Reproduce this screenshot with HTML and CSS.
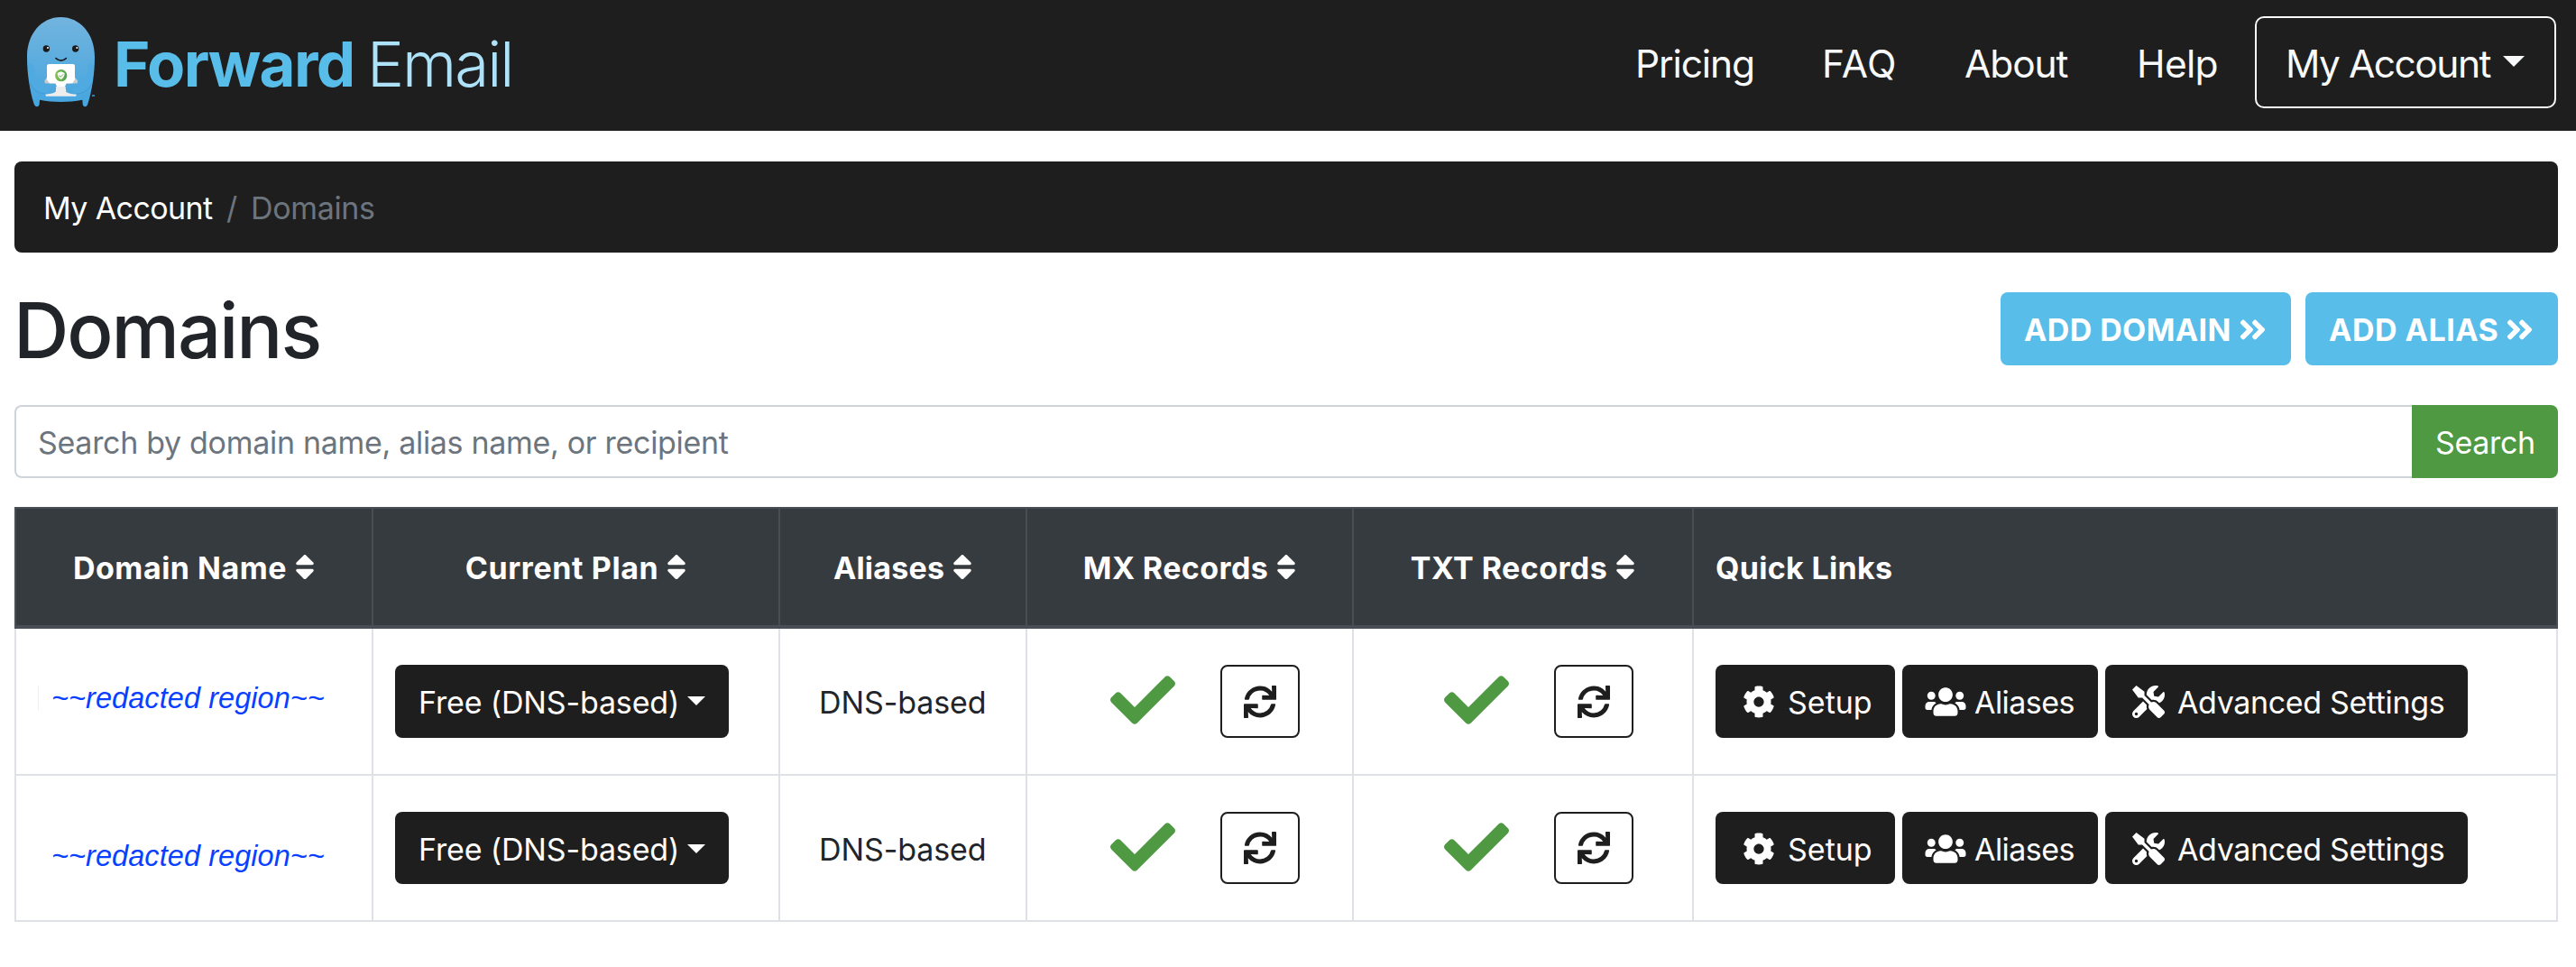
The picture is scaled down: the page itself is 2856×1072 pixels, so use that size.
FILE: index.html
```
<!DOCTYPE html>
<html lang="en">
<head>
<meta charset="utf-8">
<title>Domains</title>
<link rel="stylesheet" href="styles.css">
</head>
<body>
<svg class="sprite" aria-hidden="true">
  <symbol id="sort" viewBox="0 0 320 512"><path d="M41 288h238c21.4 0 32.1 25.9 17 41L177 448c-9.4 9.4-24.6 9.4-33.9 0L24 329c-15.1-15.1-4.4-41 17-41zm255-105L177 64c-9.4-9.4-24.6-9.4-33.9 0L24 183c-15.1 15.1-4.4 41 17 41h238c21.4 0 32.1-25.9 17-41z"/></symbol>
  <symbol id="angles" viewBox="0 0 448 512"><path d="M224.3 273l-136 136c-9.4 9.4-24.6 9.4-33.9 0l-22.6-22.6c-9.4-9.4-9.4-24.6 0-33.9l96.4-96.4-96.4-96.4c-9.4-9.4-9.4-24.6 0-33.9L54.3 103c9.4-9.4 24.6-9.4 33.9 0l136 136c9.5 9.4 9.5 24.6.1 34zm192-34l-136-136c-9.4-9.4-24.6-9.4-33.9 0l-22.6 22.6c-9.4 9.4-9.4 24.6 0 33.9l96.4 96.4-96.4 96.4c-9.4 9.4-9.4 24.6 0 33.9l22.6 22.6c9.4 9.4 24.6 9.4 33.9 0l136-136c9.4-9.2 9.4-24.4 0-33.8z"/></symbol>
  <symbol id="check" viewBox="0 0 512 512"><path d="M173.898 439.404l-166.4-166.4c-9.997-9.997-9.997-26.206 0-36.204l36.203-36.204c9.997-9.998 26.207-9.998 36.204 0L192 312.69 432.095 72.596c9.997-9.997 26.207-9.997 36.204 0l36.203 36.204c9.997 9.997 9.997 26.206 0 36.204l-294.4 294.401c-9.998 9.997-26.207 9.997-36.204-.001z"/></symbol>
  <symbol id="sync" viewBox="0 0 512 512"><path d="M440.65 12.57l4 82.77A247.16 247.16 0 0 0 255.83 8C134.73 8 33.91 94.92 12.29 209.82A12 12 0 0 0 24.09 224h49.05a12 12 0 0 0 11.67-9.26 175.91 175.91 0 0 1 317-56.94l-101.46-4.86a12 12 0 0 0-12.57 12v47.41a12 12 0 0 0 12 12H500a12 12 0 0 0 12-12V12a12 12 0 0 0-12-12h-47.37a12 12 0 0 0-11.98 12.57zM255.83 432a175.61 175.61 0 0 1-146-77.8l101.8 4.87a12 12 0 0 0 12.57-12v-47.4a12 12 0 0 0-12-12H12a12 12 0 0 0-12 12V500a12 12 0 0 0 12 12h47.35a12 12 0 0 0 12-12.6l-4.15-82.57A247.17 247.17 0 0 0 255.83 504c121.11 0 221.93-86.92 243.55-201.82a12 12 0 0 0-11.8-14.18h-49.05a12 12 0 0 0-11.67 9.26A175.86 175.86 0 0 1 255.83 432z"/></symbol>
  <symbol id="cog" viewBox="0 0 512 512"><path d="M487.4 315.7l-42.6-24.6c4.3-23.2 4.3-47 0-70.2l42.6-24.6c4.9-2.8 7.1-8.6 5.5-14-11.1-35.6-30-67.8-54.7-94.6-3.8-4.1-10-5.1-14.8-2.3L380.8 110c-17.9-15.4-38.5-27.3-60.8-35.1V25.8c0-5.6-3.9-10.5-9.4-11.7-36.7-8.2-74.3-7.8-109.2 0-5.5 1.2-9.4 6.1-9.4 11.7V75c-22.2 7.9-42.8 19.8-60.8 35.1L88.7 85.5c-4.9-2.8-11-1.9-14.8 2.3-24.7 26.7-43.6 58.9-54.7 94.6-1.7 5.4.6 11.2 5.5 14L67.3 221c-4.3 23.2-4.3 47 0 70.2l-42.6 24.6c-4.9 2.8-7.1 8.6-5.5 14 11.1 35.6 30 67.8 54.7 94.6 3.8 4.1 10 5.1 14.8 2.3l42.6-24.6c17.9 15.4 38.5 27.3 60.8 35.1v49.2c0 5.6 3.9 10.5 9.4 11.7 36.7 8.2 74.3 7.8 109.2 0 5.5-1.2 9.4-6.1 9.4-11.7v-49.2c22.2-7.9 42.8-19.8 60.8-35.1l42.6 24.6c4.9 2.8 11 1.9 14.8-2.3 24.7-26.7 43.6-58.9 54.7-94.6 1.5-5.5-.7-11.3-5.6-14.1zM256 336c-44.1 0-80-35.9-80-80s35.9-80 80-80 80 35.9 80 80-35.9 80-80 80z"/></symbol>
  <symbol id="users" viewBox="0 0 640 512"><path d="M96 224c35.3 0 64-28.7 64-64s-28.7-64-64-64-64 28.7-64 64 28.7 64 64 64zm448 0c35.3 0 64-28.7 64-64s-28.7-64-64-64-64 28.7-64 64 28.7 64 64 64zm32 32h-64c-17.6 0-33.5 7.1-45.1 18.6 40.3 22.1 68.9 62 75.1 109.4h66c17.7 0 32-14.3 32-32v-32c0-35.3-28.7-64-64-64zm-256 0c61.9 0 112-50.1 112-112S381.9 32 320 32 208 82.1 208 144s50.1 112 112 112zm76.8 32h-8.3c-20.8 10-43.9 16-68.5 16s-47.6-6-68.5-16h-8.3C179.6 288 128 339.6 128 403.2V432c0 26.5 21.5 48 48 48h288c26.5 0 48-21.5 48-48v-28.8c0-63.6-51.6-115.2-115.2-115.2zm-223.7-13.4C161.5 263.1 145.6 256 128 256H64c-35.3 0-64 28.7-64 64v32c0 17.7 14.3 32 32 32h65.9c6.3-47.4 34.9-87.3 75.2-109.4z"/></symbol>
  <symbol id="tools" viewBox="0 0 512 512"><path d="M501.1 395.7L384 278.6c-23.1-23.1-57.6-27.6-85.4-13.9L192 158.1V96L64 0 0 64l96 128h62.1l106.6 106.6c-13.6 27.8-9.2 62.3 13.9 85.4l117.1 117.1c14.6 14.6 38.2 14.6 52.7 0l52.7-52.7c14.5-14.6 14.5-38.2 0-52.7zM331.7 225c28.3 0 54.9 11 74.9 31l19.4 19.4c15.8-6.9 30.8-16.5 43.8-29.5 37.1-37.1 49.7-89.3 37.9-136.7-2.2-9-13.5-12.1-20.1-5.5l-74.4 74.4-67.9-11.3L334 98.9l74.4-74.4c6.6-6.6 3.4-17.9-5.7-20.2-47.4-11.7-99.6.9-136.6 37.9-28.5 28.5-41.9 66.1-41.2 103.6l82.1 82.1c8.1-1.9 16.5-2.9 24.7-2.9zm-103.9 82l-56.7-56.7L18.7 402.8c-25 25-25 65.5 0 90.5s65.5 25 90.5 0l123.6-123.6c-7.6-19.9-9.9-41.6-5-62.7zM64 472c-13.2 0-24-10.8-24-24 0-13.3 10.7-24 24-24s24 10.7 24 24c0 13.2-10.7 24-24 24z"/></symbol>
</svg>

<header class="navbar">
  <a class="brand">
    <svg class="logo" viewBox="0 0 330 360">
      <defs>
        <linearGradient id="skin" x1="0" y1="0" x2="0" y2="1"><stop offset="0" stop-color="#72b4de"/><stop offset="1" stop-color="#45a5df"/></linearGradient>
        <linearGradient id="badge" x1="0" y1="0" x2="1" y2="0"><stop offset="0" stop-color="#8cc152"/><stop offset="1" stop-color="#48a550"/></linearGradient>
      </defs>
      <path fill="url(#skin)" d="M157 27C92 27 45 84 45 158c0 58 9 112 23 158 4 12 17 11 18 0l1-14c46 9 95 9 142 0l1 14c1 11 14 12 17 0 14-46 23-100 23-158C270 84 222 27 157 27z"/>
      <path fill="#4faae2" d="M49 192c1-13 18-13 19 0 2 38 17 63 43 68l10 10-12 12c-24 1-46-12-54-34zM266 192c-1-13-18-13-19 0-2 38-17 63-43 68l-10 10 12 12c24 1 46-12 54-34z"/>
      <path fill="none" stroke="#3a93c9" stroke-width="2" d="M55 248c10 22 30 34 53 34M260 248c-10 22-30 34-53 34"/>
      <ellipse cx="109" cy="132" rx="11" ry="11" fill="#1b1b1d"/><circle cx="114" cy="129" r="3" fill="#fff"/>
      <ellipse cx="206" cy="132" rx="11" ry="11" fill="#1b1b1d"/><circle cx="211" cy="129" r="3" fill="#fff"/>
      <path fill="none" stroke="#1b1b1d" stroke-width="5" stroke-linecap="round" d="M141 164q17 15 34 0"/>
      <path fill="#c9cbcd" d="M104 238l8-12h91l10 12v9q-55 5-109 0z"/>
      <path fill="#fff" d="M119 183h79q6 0 6 6v46l-8 12h-20l-5 11 4 16h-35l4-16-5-11h-19l-9-12v-46q0-6 8-6z"/>
      <path fill="#ededee" d="M141 258h32l-2 13q5 12 39 13l-3 6h-98l-4-6q34-2 38-13z"/>
      <circle cx="158" cy="221" r="20" fill="url(#badge)"/>
      <path fill="#fff" d="M158 208l12 5q0 14-12 21-12-7-12-21z"/>
      <path fill="none" stroke="#65ad4f" stroke-width="3" d="M152 221l5 5 8-9"/>
      <path fill="#4faae2" d="M261 286h9v4h-9z"/>
    </svg>
    <span class="brand-forward">Forward</span><span class="brand-email">Email</span>
  </a>
  <nav class="nav">
    <a class="nav-pricing">Pricing</a>
    <a class="nav-faq">FAQ</a>
    <a class="nav-about">About</a>
    <a class="nav-help">Help</a>
    <button class="account"><span>My Account</span><i class="caret caret-lg"></i></button>
  </nav>
</header>

<main class="page">
  <div class="crumbs"><a>My Account</a><span class="slash">/</span><span class="here">Domains</span></div>

  <div class="heading">
    <h1>Domains</h1>
    <div class="actions">
      <a class="add add-domain"><span>ADD DOMAIN</span><svg><use href="#angles"/></svg></a>
      <a class="add add-alias"><span>ADD ALIAS</span><svg><use href="#angles"/></svg></a>
    </div>
  </div>

  <form class="search">
    <div class="field">Search by domain name, alias name, or recipient</div>
    <div class="submit">Search</div>
  </form>

  <div class="table">
    <div class="row head">
      <div class="cell"><span class="h-domain">Domain Name</span><svg><use href="#sort"/></svg></div>
      <div class="cell"><span class="h-plan">Current Plan</span><svg><use href="#sort"/></svg></div>
      <div class="cell"><span class="h-aliases">Aliases</span><svg><use href="#sort"/></svg></div>
      <div class="cell"><span class="h-mx">MX Records</span><svg><use href="#sort"/></svg></div>
      <div class="cell"><span class="h-txt">TXT Records</span><svg><use href="#sort"/></svg></div>
      <div class="cell links"><span class="h-links">Quick Links</span></div>
    </div>
    <div class="row first">
      <div class="cell name"><i class="tick"></i><span>~~redacted region~~</span></div>
      <div class="cell plan"><button class="btn"><span>Free (DNS-based)</span><i class="caret"></i></button></div>
      <div class="cell alias"><span>DNS-based</span></div>
      <div class="cell mx"><svg class="check"><use href="#check"/></svg><button class="refresh"><svg><use href="#sync"/></svg></button></div>
      <div class="cell txt"><svg class="check"><use href="#check"/></svg><button class="refresh"><svg><use href="#sync"/></svg></button></div>
      <div class="cell links">
        <button class="btn setup"><svg><use href="#cog"/></svg><span>Setup</span></button>
        <button class="btn people"><svg><use href="#users"/></svg><span>Aliases</span></button>
        <button class="btn advanced"><svg><use href="#tools"/></svg><span>Advanced Settings</span></button>
      </div>
    </div>
    <div class="row second">
      <div class="cell name"><span>~~redacted region~~</span></div>
      <div class="cell plan"><button class="btn"><span>Free (DNS-based)</span><i class="caret"></i></button></div>
      <div class="cell alias"><span>DNS-based</span></div>
      <div class="cell mx"><svg class="check"><use href="#check"/></svg><button class="refresh"><svg><use href="#sync"/></svg></button></div>
      <div class="cell txt"><svg class="check"><use href="#check"/></svg><button class="refresh"><svg><use href="#sync"/></svg></button></div>
      <div class="cell links">
        <button class="btn setup"><svg><use href="#cog"/></svg><span>Setup</span></button>
        <button class="btn people"><svg><use href="#users"/></svg><span>Aliases</span></button>
        <button class="btn advanced"><svg><use href="#tools"/></svg><span>Advanced Settings</span></button>
      </div>
    </div>
  </div>
</main>
</body>
</html>
```
FILE: styles.css
```
* { box-sizing: border-box; }
body {
  margin: 0;
  background: #fff;
  color: #212529;
  font: 400 34px/50px Inter, "Liberation Sans", sans-serif;
  white-space: nowrap;
}
svg { fill: currentColor; flex: none; display: block; }
.sprite { display: none; }
button { font: inherit; color: inherit; background: none; padding: 0; margin: 0; }
.caret {
  flex: none;
  border: 10px solid transparent;
  border-top-color: currentColor;
  border-bottom: 0;
}
.caret-lg { border-width: 12.5px; border-bottom: 0; }

/* top bar */
.navbar {
  height: 145px;
  background: #1e1e1e;
  display: flex;
  justify-content: space-between;
  padding: 0 22px 0 15px;
}
.brand { display: flex; align-items: flex-start; padding-top: 10px; font-size: 69px; line-height: 122px; }
.logo { width: 110px; height: 120px; }
.brand-forward { width: 281px; margin-left: 1px; font-weight: 700; letter-spacing: -1.6px; color: #59bde9; }
.brand-email { font-weight: 350; letter-spacing: -2px; color: #aee2f8; }
.nav { display: flex; padding-top: 18px; font-size: 42.5px; line-height: 105px; color: #f8f9fa; }
.nav-pricing { width: 207px; letter-spacing: -1.13px; }
.nav-faq { width: 158px; letter-spacing: .5px; }
.nav-about { width: 191px; letter-spacing: -1.1px; }
.nav-help { width: 131px; letter-spacing: -.7px; }
.account {
  width: 334px;
  height: 102px;
  border: 2px solid #f8f9fa;
  border-radius: 10px;
  display: flex;
  align-items: center;
  padding: 3px 0 0 32px;
  letter-spacing: -1.5px;
}
.account span { width: 241px; text-align: left; }
.account .caret { margin-top: -5px; }

.page { padding: 34px 20px 0 16px; }

.crumbs {
  height: 101px;
  border-radius: 8px;
  background: #1e1e1e;
  display: flex;
  align-items: center;
  padding: 2px 0 0 32px;
  color: #6c757d;
}
.crumbs a { width: 203px; color: #fff; letter-spacing: -.6px; }
.crumbs .slash { width: 27px; }
.crumbs .here { letter-spacing: -.35px; }

.heading { height: 169px; display: flex; justify-content: space-between; align-items: flex-start; }
h1 { margin: 36px 0 0 -1px; font-size: 85px; line-height: 102px; font-weight: 500; letter-spacing: -2.1px; }
.actions { display: flex; gap: 16px; padding-top: 44px; }
.add {
  height: 81px;
  border-radius: 8px;
  background: #59bde9;
  color: #fff;
  font-weight: 650;
  display: flex;
  align-items: center;
  padding: 2px 0 0 26px;
}
.add-domain { width: 322px; letter-spacing: .4px; }
.add-domain span { width: 238px; }
.add-alias { width: 280px; letter-spacing: .5px; }
.add-alias span { width: 196px; }
.add svg { width: 31px; height: 35px; }

.search { height: 81px; display: flex; margin: 0; }
.field {
  flex: 1;
  border: 2px solid #ced4da;
  border-right: 0;
  border-radius: 8px 0 0 8px;
  padding: 15px 0 0 24px;
  color: #6c757d;
  letter-spacing: -.31px;
}
.submit {
  width: 162px;
  border-radius: 0 8px 8px 0;
  background: #4e9942;
  color: #fff;
  padding: 17px 0 0 26px;
  letter-spacing: -.34px;
}

/* domains table */
.table { margin-top: 32px; }
.row { display: grid; grid-template-columns: 398px 451px 274px 362px 377px 958px; }
.cell {
  display: flex;
  align-items: center;
  border-right: 2px solid #dee2e6;
  border-bottom: 2px solid #dee2e6;
}
.cell:first-child { border-left: 2px solid #dee2e6; }
.head { height: 135px; background: #363b3f; color: #fff; font-weight: 650; border-top: 2px solid #484d56; }
.head .cell, .head .cell:first-child { border-color: #484d56; border-bottom-width: 4px; justify-content: center; gap: 9px; padding-top: 2px; }
.head svg { width: 22px; height: 35px; margin-top: -3px; }
.head .links { justify-content: flex-start; }
.h-domain { letter-spacing: .5px; }
.h-plan { letter-spacing: .6px; }
.h-aliases { letter-spacing: .19px; }
.h-mx { letter-spacing: .4px; }
.h-txt { letter-spacing: .43px; }
.h-links { letter-spacing: .32px; }
.first { height: 163px; }
.second { height: 162px; }

.name { font: italic 32.5px/50px "Liberation Sans", Arial, sans-serif; color: #0a3fff; letter-spacing: .06px; }
.name span { margin-left: 39px; }
.first .name { padding-bottom: 8px; }
.second .name { padding-top: 17px; }
.tick { width: 1px; height: 28px; background: #f0f0f0; margin-left: 24px; }
.first .name span { margin-left: 14px; }

.btn {
  height: 81px;
  border: 0;
  border-radius: 8px;
  background: #1e1e1e;
  color: #fff;
  display: flex;
  align-items: center;
  padding-top: 2px;
}
.second .btn, .second .refresh { height: 80px; }
.second .btn { padding-top: 4px; }
.plan { padding-left: 24px; }
.plan .btn { width: 370px; padding-left: 26px; letter-spacing: -.16px; }
.plan .btn span { width: 298px; text-align: left; }
.plan .caret { margin-top: -3px; }
.alias { padding: 2px 0 0 43px; letter-spacing: -.1px; }
.second .alias { padding-top: 4px; }
.mx { padding-left: 92px; }
.txt { padding-left: 100px; }
.check { width: 72px; height: 72px; color: #4e9942; margin-top: -3px; }
.refresh {
  width: 88px;
  height: 81px;
  margin-left: 50px;
  border: 2px solid #1e1e1e;
  border-radius: 8px;
  color: #1e1e1e;
  display: flex;
  align-items: center;
  justify-content: center;
}
.refresh svg { width: 36px; height: 36px; }
.links { padding-left: 24px; gap: 8px; }
.btn.setup { width: 199px; padding-left: 30px; }
.setup svg { width: 36px; height: 36px; margin: -2px 14px 0 0; }
.btn.people { width: 217px; padding-left: 25px; letter-spacing: -.55px; }
.people svg { width: 46px; height: 36px; margin: -2px 9px 0 0; }
.btn.advanced { width: 402px; padding-left: 30px; letter-spacing: -.36px; }
.advanced svg { width: 36px; height: 36px; margin: -2px 14px 0 0; }
```
